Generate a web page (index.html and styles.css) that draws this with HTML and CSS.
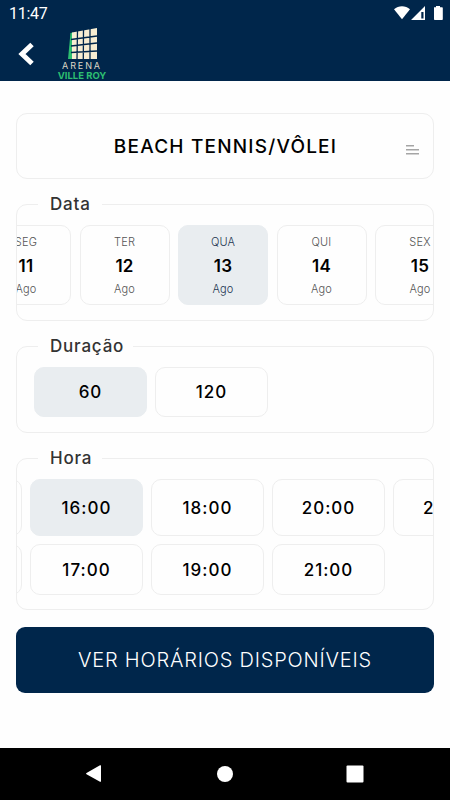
FILE: index.html
```html
<!DOCTYPE html>
<html lang="pt-BR">
<head>
    <meta charset="UTF-8">
    <meta name="viewport" content="width=device-width, initial-scale=1">
    <title>Arena Ville Roy</title>
    <link rel="stylesheet" href="styles.css">
</head>
<body>
    <header class="header">
        <div class="status-bar">
            <span class="clock">11:47</span>
            <svg class="status-icons" width="50" height="16" viewBox="0 0 50 16" fill="#fff">
                <path d="M0 3.2C4.5-.9 11.500-.9 16 3.200L8 13.200z"/>
                <path fill-rule="evenodd" d="M31 0v14H17zM27.300 6v6.500h2.200V6z"/>
                <path d="M40 1.200h2V0h4v1.200h2q.8 0 .8.800v11.200q0 .8-.8.800h-7.200q-.8 0-.8-.8z"/>
            </svg>
        </div>
        <div class="app-bar">
            <svg class="back" width="16" height="24" viewBox="0 0 16 24">
                <path d="M14 2.500L4 12l10 9.500" fill="none" stroke="#fff" stroke-width="5"/>
            </svg>
            <div class="logo">
                <svg class="logo-mark" width="30" height="32" viewBox="0 0 30 32">
                    <path d="M2.500 5L5 4.500 4 31H0z" fill="#2dbe71"/>
                    <path d="M4 4.500L29 0v31H4z" fill="#f7edd2"/>
                    <path d="M9.500 3L9 31M15.500 2L15.300 31M22 1v30M3 11.500L29 8M3 18l26-3M3 24.500L29 23" fill="none" stroke="#00264b" stroke-width="1.300"/>
                </svg>
                <span class="logo-arena">ARENA</span>
                <span class="logo-name">VILLE ROY</span>
            </div>
        </div>
    </header>

    <main class="content">
        <div class="court">
            <span class="court-name">BEACH TENNIS/VÔLEI</span>
            <svg class="court-icon" width="13" height="10" viewBox="0 0 13 10" fill="#a5a5a5">
                <path d="M0 0h8v1.500H0zM0 4h13v1.500H0zM0 8h13v1.500H0z"/>
            </svg>
        </div>

        <fieldset class="group group-date">
            <legend class="legend-date">Data</legend>
            <div class="scroller">
                <div class="days">
                    <div class="day"><span>SEG</span><b>11</b><span>Ago</span></div>
                    <div class="day"><span>TER</span><b>12</b><span>Ago</span></div>
                    <div class="day selected"><span>QUA</span><b>13</b><span>Ago</span></div>
                    <div class="day"><span>QUI</span><b>14</b><span>Ago</span></div>
                    <div class="day"><span>SEX</span><b>15</b><span>Ago</span></div>
                </div>
            </div>
        </fieldset>

        <fieldset class="group group-duration">
            <legend class="legend-duration">Duração</legend>
            <div class="durations">
                <div class="option selected">60</div>
                <div class="option">120</div>
            </div>
        </fieldset>

        <fieldset class="group group-hour">
            <legend class="legend-hour">Hora</legend>
            <div class="scroller">
                <div class="hours">
                    <div class="option"></div>
                    <div class="option selected">16:00</div>
                    <div class="option">18:00</div>
                    <div class="option">20:00</div>
                    <div class="option">22:00</div>
                    <div class="option"></div>
                    <div class="option">17:00</div>
                    <div class="option">19:00</div>
                    <div class="option">21:00</div>
                </div>
            </div>
        </fieldset>

        <button class="submit" type="button">VER HORÁRIOS DISPONÍVEIS</button>
    </main>

    <nav class="nav-bar">
        <svg width="18" height="20" viewBox="0 0 18 20" fill="#fff"><path d="M1.500 9.100L15 1.300q1-.5 1 .5v15.400q0 1-1 .5L1.500 10.200q-1-.6 0-1.100z"/></svg>
        <svg width="18" height="18" viewBox="0 0 18 18" fill="#fff"><circle cx="9" cy="9" r="8"/></svg>
        <svg width="18" height="18" viewBox="0 0 18 18" fill="#fff"><rect x="0.500" y="0.500" width="17" height="17" rx="1"/></svg>
    </nav>
</body>
</html>
```
FILE: styles.css
```css
* {
    box-sizing: border-box;
}

body {
    margin: 0;
    height: 100vh;
    display: flex;
    flex-direction: column;
    overflow: hidden;
    background-color: #fefefe;
    color: #000;
    font-family: Inter, "Liberation Sans", sans-serif;
}

svg {
    display: block;
    flex-shrink: 0;
}

.header {
    height: 81px;
    flex-shrink: 0;
    background-color: #00264b;
    color: #fff;
}

.status-bar {
    display: flex;
    justify-content: space-between;
    height: 28px;
    padding: 6px 6px 0 9px;
}

.clock {
    font: 16px/16px Roboto, sans-serif;
    letter-spacing: -0.3px;
}

.app-bar {
    display: flex;
    padding-left: 18px;
}

.back {
    margin-top: 14px;
}

.logo {
    display: flex;
    flex-direction: column;
    align-items: center;
    width: 60px;
    margin-left: 18px;
    white-space: nowrap;
}

.logo-mark {
    margin-left: 2px;
}

.logo-arena {
    margin-top: 1px;
    font-size: 9px;
    line-height: 10px;
    letter-spacing: 1.9px;
    color: #ddd6c5;
}

.logo-name {
    font-size: 9.5px;
    line-height: 9px;
    font-weight: 700;
    letter-spacing: 0;
    color: #2dbe71;
}

.content {
    flex: 1;
    padding: 32px 16px 0;
}

.court {
    display: flex;
    align-items: center;
    height: 66px;
    padding-right: 14px;
    border: 1px solid #eee;
    border-radius: 11px;
}

.court-name {
    flex: 1;
    padding-left: 28px;
    text-align: center;
    font-size: 19px;
    font-weight: 500;
    letter-spacing: 1.2px;
}

.court-icon {
    margin-top: 8px;
}

.group {
    min-width: 0;
    margin: 0;
    padding: 0;
    border: 1px solid #eee;
    border-radius: 11px;
}

.group legend {
    height: 20px;
    margin-left: 21px;
    padding: 0 0 0 12px;
    font-size: 17px;
    line-height: 20px;
    font-weight: 500;
    letter-spacing: 0.8px;
    color: #333;
}

.group .legend-date,
.group .legend-hour {
    width: 64px;
}

.group .legend-duration {
    width: 95px;
}

.group-date {
    height: 127px;
    margin-top: 15px;
}

.group-duration {
    height: 97px;
    margin-top: 15px;
}

.group-hour {
    height: 162px;
    margin-top: 15px;
}

.scroller {
    overflow: hidden;
}

.days {
    display: flex;
    gap: 8.5px;
    margin: 11px 0 0 -36px;
}

.day {
    display: flex;
    flex-direction: column;
    align-items: center;
    flex: 0 0 90px;
    height: 80px;
    padding-top: 9px;
    border: 1px solid #eee;
    border-radius: 10px;
    font-size: 11px;
    line-height: 14px;
    font-weight: 300;
    letter-spacing: 0.2px;
    color: #555;
}

.day b {
    margin: 8px 0 7px;
    font-size: 17px;
    line-height: 18px;
    font-weight: 600;
    color: #000;
}

.day.selected {
    color: #1d3550;
}

.option {
    display: flex;
    align-items: center;
    justify-content: center;
    width: 113px;
    border: 1px solid #eee;
    border-radius: 10px;
    font-size: 17px;
    font-weight: 500;
    letter-spacing: 1px;
}

.selected {
    background-color: #e9edf0;
    border-color: #e9edf0;
}

.durations {
    display: flex;
    gap: 8px;
    height: 50px;
    margin: 11px 0 0 17px;
}

.hours {
    display: grid;
    grid-template-columns: repeat(5, 113px);
    grid-template-rows: 57px 51px;
    gap: 8px;
    margin: 11px 0 0 -108px;
}

.submit {
    display: block;
    width: 100%;
    height: 66px;
    margin-top: 17px;
    padding: 0;
    border: none;
    border-radius: 9px;
    background-color: #00264b;
    color: #fff;
    font-family: inherit;
    font-size: 20px;
    font-weight: 300;
    letter-spacing: 0.8px;
}

.nav-bar {
    display: flex;
    align-items: center;
    justify-content: space-between;
    height: 52px;
    flex-shrink: 0;
    padding: 0 86px 0 85px;
    background-color: #000;
}
```
